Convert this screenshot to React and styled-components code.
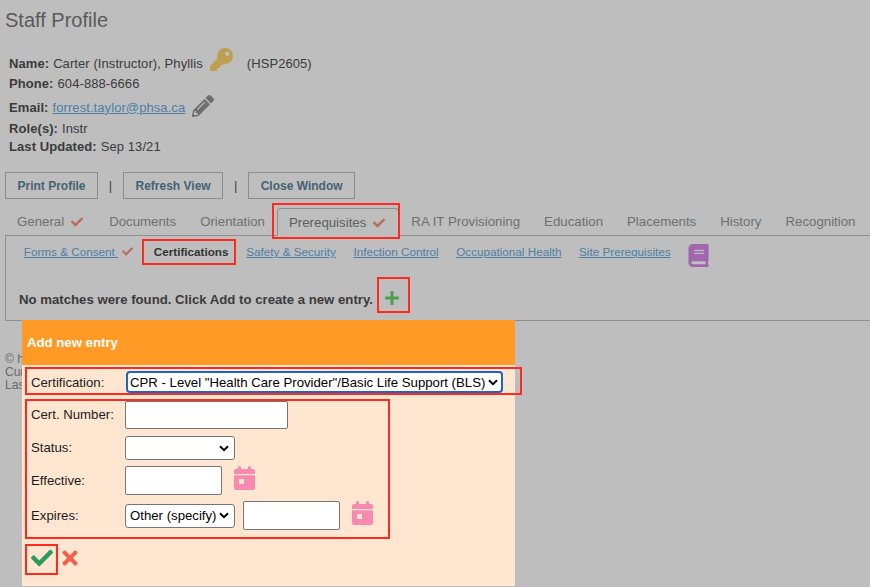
import React from "react";
import styled, { createGlobalStyle } from "styled-components";
import { FaKey, FaPencilAlt, FaCheck, FaTimes, FaPlus, FaBook } from "react-icons/fa";

const chevron = "data:image/svg+xml;utf8,<svg xmlns='http://www.w3.org/2000/svg' width='10' height='7' viewBox='0 0 10 7'><path d='M1 1.2l4 4 4-4' fill='none' stroke='black' stroke-width='2'/></svg>";

const GlobalStyle = createGlobalStyle`
    html, body {
        margin: 0;
        height: 587px;
        overflow: hidden;
        background: #bebebe;
        font-family: "Liberation Sans", Arial, sans-serif;
    }
`;

const Page = styled.div`
    position: relative;
    width: 870px;
    height: 587px;
    padding: 9px 0 0 5px;
    box-sizing: border-box;
    color: #3b3b3b;
`;

const Title = styled.h1`
    margin: 0 0 21px;
    font-size: 20px;
    line-height: 23px;
    font-weight: 400;
    color: #5a5a5a;
`;

const Info = styled.div`
    padding-left: 4px;
    font-size: 13px;
    letter-spacing: .08px;
`;

const InfoRow = styled.div`
    display: flex;
    align-items: center;
    height: ${props => props.$h || 20}px;

    b {
        margin-right: 4px;
    }
`;

const KeyIcon = styled(FaKey)`
    margin: -7px 0 0 7px;
    font-size: 23px;
    color: #bf9f4f;
`;

const PencilIcon = styled(FaPencilAlt)`
    margin: -3px 0 0 7px;
    font-size: 22px;
    color: #6e6e6e;
`;

const Code = styled.span`
    margin-left: 14px;
`;

const MailLink = styled.a`
    color: #4d7fa6;
    text-decoration: underline;
`;

const Toolbar = styled.div`
    display: flex;
    align-items: center;
    margin-top: 17px;
`;

const ToolButton = styled.button`
    height: 27px;
    padding: 0 11.5px;
    border: 1px solid #8c8c8c;
    background: transparent;
    font: bold 12px "Liberation Sans", Arial, sans-serif;
    color: #456273;
`;

const ToolSep = styled.span`
    width: 25px;
    text-align: center;
    font-size: 13px;
    color: #444;
`;

const Tabs = styled.div`
    display: flex;
    height: 28px;
    margin-top: 8px;
    align-items: flex-end;
`;

const Tab = styled.div`
    display: flex;
    align-items: center;
    height: 28px;
    padding: 1px 12px 0;
    box-sizing: border-box;
    font-size: 13.25px;
    white-space: nowrap;
    color: ${props => (props.$active ? "#5d5d5d" : "#6f6f6f")};
    ${props => props.$active && `
        position: relative;
        z-index: 1;
        margin-bottom: -1px;
        padding: 0 13px 0 11px;
        border: 1px solid #8f8f8f;
        border-bottom: 0;
        border-radius: 4px 4px 0 0;
        background: #bebebe;
    `}
`;

const TickIcon = styled(FaCheck)`
    margin: 0 ${props => props.$mr || 0}px 0 7px;
    font-size: 12px;
    color: #bf6a5f;
`;

const Panel = styled.div`
    height: 86px;
    box-sizing: border-box;
    padding: 5px 0 0 13px;
    border: 1px solid #8f8f8f;
    border-right: 0;
`;

const SubTabs = styled.div`
    display: flex;
    align-items: center;
    height: 21px;
    margin-left: -4px;
    font-size: 11.7px;
`;

const SubLink = styled.a`
    margin: 0 4.8px;
    padding: 0 4px;
    color: #4d7fa6;
    text-decoration: underline;
    white-space: pre;
`;

const SubTick = styled(FaCheck)`
    margin: 0 10px 0 -5px;
    font-size: 11px;
    color: #bf6a5f;
`;

const SubActive = styled.b`
    margin: 0 9px 0 11px;
    color: #333;
`;

const BookIcon = styled(FaBook)`
    margin: 7px 0 0 8px;
    font-size: 23px;
    color: #a066ae;
`;

const NoMatches = styled.div`
    display: flex;
    align-items: center;
    margin-top: 30px;
    font-size: 13.2px;
    font-weight: 700;
    color: #3b3b3b;
`;

const PlusIcon = styled(FaPlus)`
    margin: -4px 0 0 11px;
    font-size: 16px;
    color: #4f9f4f;
`;

const Footer = styled.div`
    margin-top: 32px;
    font-size: 12px;
    line-height: 13px;
    color: #686868;
`;

const Modal = styled.div`
    position: absolute;
    left: 22px;
    top: 320px;
    width: 493px;
    height: 266px;
    background: #ffe6d1;
`;

const ModalHeader = styled.div`
    display: flex;
    align-items: center;
    height: 45px;
    padding-left: 5px;
    background: #ff9a26;
    font-size: 13.2px;
    font-weight: 700;
    color: #fff;
`;

const ModalBody = styled.div`
    padding: 6px 0 0 9px;
    font-size: 13.2px;
    color: #1c1c1c;
`;

const FormRow = styled.div`
    display: flex;
    align-items: center;
    height: ${props => props.$h}px;
    margin-bottom: ${props => props.$mb || 0}px;
`;

const Label = styled.label`
    width: 94px;
    flex: none;
    margin-top: ${props => props.$up ? -2 : 0}px;
`;

const TextInput = styled.input`
    width: ${props => props.$w}px;
    height: ${props => props.$h}px;
    box-sizing: border-box;
    margin-left: ${props => props.$ml || 0}px;
    border: 1px solid #767676;
    border-radius: 2px;
    background: #fff;
`;

const Select = styled.select`
    appearance: none;
    width: ${props => props.$w}px;
    height: 24px;
    box-sizing: border-box;
    padding: 0 0 0 4px;
    border: 1px solid #767676;
    border-radius: 3px;
    background: #fff url("${chevron}") no-repeat right 5px center;
    font: 13.2px "Liberation Sans", Arial, sans-serif;
    color: #000;
`;

const FocusSelect = styled(Select)`
    height: 22px;
    margin-left: 1px;
    padding-left: 2px;
    border: 2px solid #1a66c8;
    border-radius: 4px;
    background-position: right 3px center;
`;

const Actions = styled.div`
    display: flex;
    align-items: center;
    margin-top: 17px;
`;

const OkIcon = styled(FaCheck)`
    font-size: 22px;
    color: #2e9a5b;
`;

const CancelIcon = styled(FaTimes)`
    margin-left: 6px;
    font-size: 22px;
    color: #f0624a;
`;

const CalendarWrap = styled.svg`
    flex: none;
    width: 21px;
    height: 24px;
    margin: ${props => props.$m};
    fill: #f78ab0;
`;

const Mark = styled.div`
    position: absolute;
    left: ${props => props.$x}px;
    top: ${props => props.$y}px;
    width: ${props => props.$w}px;
    height: ${props => props.$h}px;
    box-sizing: border-box;
    border: 2px solid #ff2a1f;
    pointer-events: none;
    z-index: 5;
`;

const Calendar = ({ m }) => (
    <CalendarWrap $m={m} viewBox="0 0 21 24">
        <path d="M4 1.5a1.5 1.5 0 0 1 3 0V3h7V1.5a1.5 1.5 0 0 1 3 0V3h2a2 2 0 0 1 2 2v3H0V5a2 2 0 0 1 2-2h2z" />
        <path fillRule="evenodd" d="M0 9.2h21V22a2 2 0 0 1-2 2H2a2 2 0 0 1-2-2zM5 13v5h5v-5z" />
    </CalendarWrap>
);

const tabs = ["Documents", "Orientation"];
const moreTabs = ["RA IT Provisioning", "Education", "Placements", "History", "Recognition"];

const App = () => {
    return (
        <Page>
            <GlobalStyle />
            <Title>Staff Profile</Title>
            <Info>
                <InfoRow>
                    <b>Name:</b> Carter (Instructor), Phyllis
                    <KeyIcon />
                    <Code>(HSP2605)</Code>
                </InfoRow>
                <InfoRow $h={21}>
                    <b>Phone:</b> 604-888-6666
                </InfoRow>
                <InfoRow $h={26}>
                    <b>Email:</b> <MailLink href="#">forrest.taylor@phsa.ca</MailLink>
                    <PencilIcon />
                </InfoRow>
                <InfoRow $h={17}>
                    <b>Role(s):</b> Instr
                </InfoRow>
                <InfoRow $h={18}>
                    <b>Last Updated:</b> Sep 13/21
                </InfoRow>
            </Info>
            <Toolbar>
                <ToolButton>Print Profile</ToolButton>
                <ToolSep>|</ToolSep>
                <ToolButton>Refresh View</ToolButton>
                <ToolSep>|</ToolSep>
                <ToolButton>Close Window</ToolButton>
            </Toolbar>
            <Tabs>
                <Tab>General<TickIcon $mr={2} /></Tab>
                {tabs.map(t => <Tab key={t}>{t}</Tab>)}
                <Tab $active>Prerequisites<TickIcon /></Tab>
                {moreTabs.map(t => <Tab key={t}>{t}</Tab>)}
            </Tabs>
            <Panel>
                <SubTabs>
                    <SubLink href="#">Forms &amp; Consent </SubLink>
                    <SubTick />
                    <SubActive>Certifications</SubActive>
                    <SubLink href="#">Safety &amp; Security</SubLink>
                    <SubLink href="#">Infection Control</SubLink>
                    <SubLink href="#">Occupational Health</SubLink>
                    <SubLink href="#">Site Prerequisites</SubLink>
                    <BookIcon />
                </SubTabs>
                <NoMatches>
                    No matches were found. Click Add to create a new entry.
                    <PlusIcon />
                </NoMatches>
            </Panel>
            <Footer>
                © health<br />Current<br />Last
            </Footer>

            <Modal>
                <ModalHeader>Add new entry</ModalHeader>
                <ModalBody>
                    <FormRow $h={22} $mb={8}>
                        <Label>Certification:</Label>
                        <FocusSelect $w={377} defaultValue="bls">
                            <option value="bls">CPR - Level "Health Care Provider"/Basic Life Support (BLS)</option>
                        </FocusSelect>
                    </FormRow>
                    <FormRow $h={28} $mb={7}>
                        <Label $up>Cert. Number:</Label>
                        <TextInput $w={163} $h={28} />
                    </FormRow>
                    <FormRow $h={24} $mb={6}>
                        <Label $up>Status:</Label>
                        <Select $w={110}><option></option></Select>
                    </FormRow>
                    <FormRow $h={29} $mb={6}>
                        <Label>Effective:</Label>
                        <TextInput $w={97} $h={29} />
                        <Calendar m="-5px 0 0 12px" />
                    </FormRow>
                    <FormRow $h={29}>
                        <Label>Expires:</Label>
                        <Select $w={110}><option>Other (specify)</option></Select>
                        <TextInput $w={97} $h={29} $ml={8} />
                        <Calendar m="-6px 0 0 12px" />
                    </FormRow>
                    <Actions>
                        <OkIcon />
                        <CancelIcon />
                    </Actions>
                </ModalBody>
            </Modal>

            <Mark $x={272} $y={203} $w={128} $h={36} />
            <Mark $x={142} $y={239} $w={94} $h={26} />
            <Mark $x={377} $y={277} $w={33} $h={36} />
            <Mark $x={25} $y={367} $w={497} $h={28} />
            <Mark $x={25} $y={399} $w={365} $h={140} />
            <Mark $x={25} $y={544} $w={33} $h={31} />
        </Page>
    );
};

export default App;
